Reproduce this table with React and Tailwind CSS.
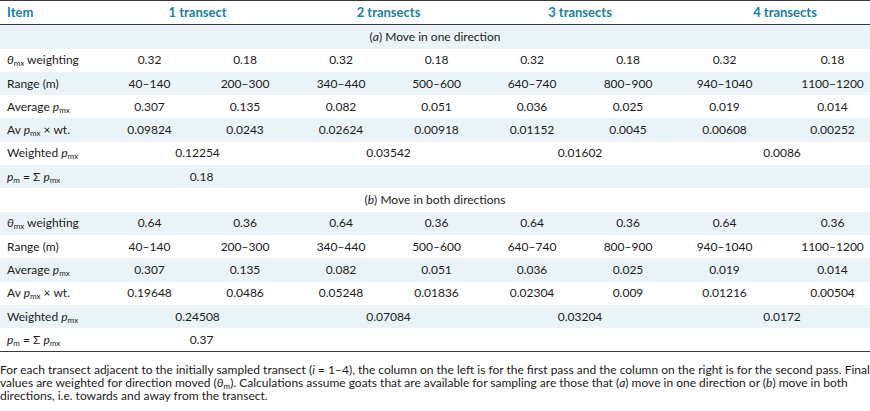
const FONT = { fontFamily: 'Lato, "Open Sans", sans-serif' };

const Pmx = () => (
  <>
    <span className="italic">p</span>
    <sub className="text-[8px]">mx</sub>
  </>
);

const Theta = () => (
  <>
    <span className="italic">θ</span>
    <sub className="text-[8px]">mx</sub>
  </>
);

const ranges = ['40–140', '200–300', '340–440', '500–600', '640–740', '800–900', '940–1040', '1100–1200'];
const averages = ['0.307', '0.135', '0.082', '0.051', '0.036', '0.025', '0.019', '0.014'];

const sections = [
  {
    title: 'a',
    caption: 'Move in one direction',
    weights: ['0.32', '0.18'],
    av: ['0.09824', '0.0243', '0.02624', '0.00918', '0.01152', '0.0045', '0.00608', '0.00252'],
    weighted: ['0.12254', '0.03542', '0.01602', '0.0086'],
    pm: '0.18',
  },
  {
    title: 'b',
    caption: 'Move in both directions',
    weights: ['0.64', '0.36'],
    av: ['0.19648', '0.0486', '0.05248', '0.01836', '0.02304', '0.009', '0.01216', '0.00504'],
    weighted: ['0.24508', '0.07084', '0.03204', '0.0172'],
    pm: '0.37',
  },
];

const GRID = 'grid grid-cols-[102px_95px_96px_96px_95px_96px_96px_97px_97px] items-center h-[23.3px]';

// zebra: first data row is blue
const rowBg = (i) => (i % 2 === 0 ? 'bg-[#eaf4f8]' : 'bg-white');

function Row({ label, values, bg }) {
  return (
    <div className={`${GRID} ${bg}`}>
      <div className="pl-[7px] whitespace-nowrap">{label}</div>
      {values.map((v, i) => (
        <div key={i} className={`text-center ${i === 7 ? 'pl-[22px]' : ''}`}>{v}</div>
      ))}
    </div>
  );
}

function PairRow({ label, values, bg }) {
  return (
    <div className={`${GRID} ${bg}`}>
      <div className="pl-[7px] whitespace-nowrap">{label}</div>
      {values.map((v, i) => (
        <div key={i} className={`col-span-2 text-center ${i === 3 ? 'pl-[18px]' : ''}`}>{v}</div>
      ))}
    </div>
  );
}

function Section({ s, offset }) {
  const weights = [0, 1, 2, 3].flatMap(() => s.weights);
  return (
    <>
      <div className={`flex items-center justify-center h-[23.3px] ${rowBg(offset)}`}>
        <span>
          (<span className="italic">{s.title}</span>) {s.caption}
        </span>
      </div>
      <Row label={<><Theta /> weighting</>} values={weights} bg={rowBg(offset + 1)} />
      <Row label="Range (m)" values={ranges} bg={rowBg(offset + 2)} />
      <Row label={<>Average <Pmx /></>} values={averages} bg={rowBg(offset + 3)} />
      <Row label={<>Av <Pmx /> × wt.</>} values={s.av} bg={rowBg(offset + 4)} />
      <PairRow label={<>Weighted <Pmx /></>} values={s.weighted} bg={rowBg(offset + 5)} />
      <div className={`${GRID} ${rowBg(offset + 6)}`}>
        <div className="pl-[7px] whitespace-nowrap">
          <span className="italic">p</span>
          <sub className="text-[8px]">m</sub> = Σ <Pmx />
        </div>
        <div className="col-span-2 text-center pl-[8px]">{s.pm}</div>
      </div>
    </>
  );
}

export default function App() {
  return (
    <div className="w-[870px] h-[411px] bg-white text-[#1a1a1a] text-[12px] overflow-hidden" style={FONT}>
      <div className="border-t-[1.5px] border-b border-[#3a3a3a]">
        <div className={`${GRID} h-[21.5px] text-[13px] font-bold text-[#1a7ea3]`}>
          <div className="pl-[7px]">Item</div>
          <div className="col-span-2 text-center">1 transect</div>
          <div className="col-span-2 text-center">2 transects</div>
          <div className="col-span-2 text-center">3 transects</div>
          <div className="col-span-2 text-center pl-[24px]">4 transects</div>
        </div>
      </div>
      <div className="border-b-[1.5px] border-[#3a3a3a]">
        <Section s={sections[0]} offset={0} />
        <Section s={sections[1]} offset={7} />
      </div>
      <p className="pt-[11px] text-[12px] leading-[13px] whitespace-nowrap">
        For each transect adjacent to the initially sampled transect (<span className="italic">i</span> = 1–4), the column on the left is for the first pass and the column on the right is for the second pass. Final
        <br />
        values are weighted for direction moved (<span className="italic">θ</span>
        <sub className="text-[8px]">m</sub>). Calculations assume goats that are available for sampling are those that (<span className="italic">a</span>) move in one direction or (<span className="italic">b</span>) move in both
        <br />
        directions, i.e. towards and away from the transect.
      </p>
    </div>
  );
}
